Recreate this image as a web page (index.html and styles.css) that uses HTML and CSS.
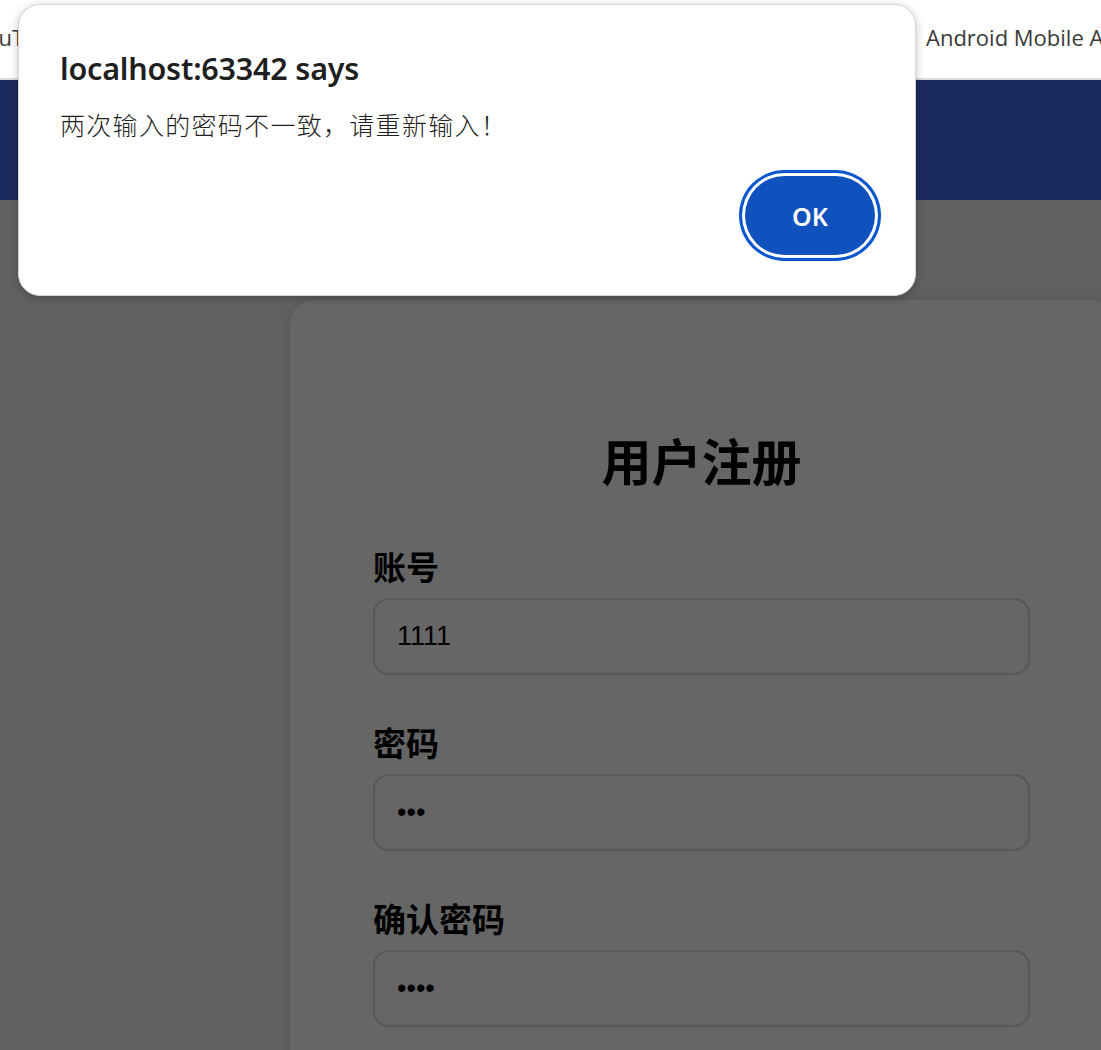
FILE: index.html
```html
<!DOCTYPE html>
<html lang="zh-CN">
<head>
<meta charset="utf-8">
<title>用户注册</title>
<link rel="stylesheet" href="styles.css">
</head>
<body>
<div class="bookmarks">
  <div class="bm-cell"><span class="bm bm-first">YouTube</span></div>
  <div class="bm-cell"><span class="bm">Android Mobile App Development</span></div>
</div>
<header class="topbar"></header>
<main class="page">
  <section class="card">
    <h2 class="card-title">用户注册</h2>
    <form class="form">
      <div class="field">
        <label class="label">账号</label>
        <input class="input" type="text" value="1111">
      </div>
      <div class="field">
        <label class="label">密码</label>
        <input class="input" type="password" value="123">
      </div>
      <div class="field">
        <label class="label">确认密码</label>
        <input class="input" type="password" value="1234">
      </div>
    </form>
  </section>
</main>
<div class="dialog" role="alertdialog">
  <div class="dialog-title">localhost:63342 says</div>
  <div class="dialog-msg">两次输入的密码不一致，请重新输入！</div>
  <div class="dialog-actions"><button class="ok-btn" type="button">OK</button></div>
</div>
</body>
</html>
```
FILE: styles.css
```css
html, body {
  margin: 0;
  padding: 0;
  overflow: hidden;
  height: 1050px;
}
body {
  font-family: "Noto Sans", "Noto Sans CJK SC", sans-serif;
  background: #616161;
  position: relative;
}
.bookmarks {
  height: 78px;
  background: #ffffff;
  border-bottom: 2px solid #dcdcdc;
  display: grid;
  grid-template-columns: 926px auto;
  align-items: center;
  white-space: nowrap;
  overflow: hidden;
}
.bm-cell {
  overflow: hidden;
}
.bm {
  font-family: "Open Sans", "Noto Sans", sans-serif;
  font-size: 22px;
  color: #3a3a3a;
  display: inline-block;
  padding-bottom: 4px;
}
.bm-first {
  margin-left: -27px;
}
.topbar {
  height: 120px;
  background: #1b2a5d;
}
.page {
  padding-top: 100px;
}
.card {
  box-sizing: border-box;
  margin-left: 290px;
  width: 823px;
  min-height: 900px;
  background: #666666;
  border-radius: 24px;
  padding: 134px 83px 40px;
  box-shadow: 0 0 14px rgba(0, 0, 0, 0.12);
}
.card-title {
  margin: 0 0 66px;
  text-align: center;
  font-family: "Noto Sans CJK SC", sans-serif;
  font-weight: 700;
  font-size: 50px;
  line-height: 50px;
  color: #000;
}
.form {
  display: flex;
  flex-direction: column;
  gap: 51px;
}
.field {
  display: flex;
  flex-direction: column;
}
.label {
  font-family: "Noto Sans CJK SC", sans-serif;
  font-weight: 700;
  font-size: 33px;
  line-height: 33px;
  color: #000;
  margin-bottom: 15px;
}
.input {
  box-sizing: border-box;
  height: 77px;
  width: 100%;
  border: 2px solid #585858;
  border-radius: 16px;
  background: transparent;
  padding: 0 22px;
  font-family: "Liberation Sans", Arial, sans-serif;
  font-size: 27px;
  color: #000;
  outline: none;
}
.dialog {
  position: absolute;
  left: 18px;
  top: 4px;
  width: 898px;
  height: 292px;
  box-sizing: border-box;
  background: #ffffff;
  border: 1px solid #d6d6d6;
  border-radius: 22px;
  box-shadow: 0 2px 8px rgba(0, 0, 0, 0.25);
  padding: 43px 34px 0 41px;
  color: #1f1f1f;
}
.dialog-title {
  font-family: "Noto Sans", sans-serif;
  font-weight: 600;
  font-size: 30.5px;
  line-height: 40px;
  letter-spacing: -0.2px;
}
.dialog-msg {
  margin-top: 18px;
  font-family: "Noto Sans CJK SC", sans-serif;
  font-weight: 300;
  font-size: 25px;
  line-height: 36px;
  letter-spacing: 1.3px;
}
.dialog-actions {
  display: flex;
  justify-content: flex-end;
  margin-top: 34px;
  padding-right: 6px;
}
.ok-btn {
  width: 130px;
  height: 79px;
  border: none;
  border-radius: 40px;
  background: #1052bd;
  color: #ffffff;
  font-family: "Noto Sans", sans-serif;
  font-weight: 600;
  font-size: 25px;
  box-shadow: 0 0 0 3px #ffffff, 0 0 0 6px #0b57d0;
  padding: 0;
}
```
